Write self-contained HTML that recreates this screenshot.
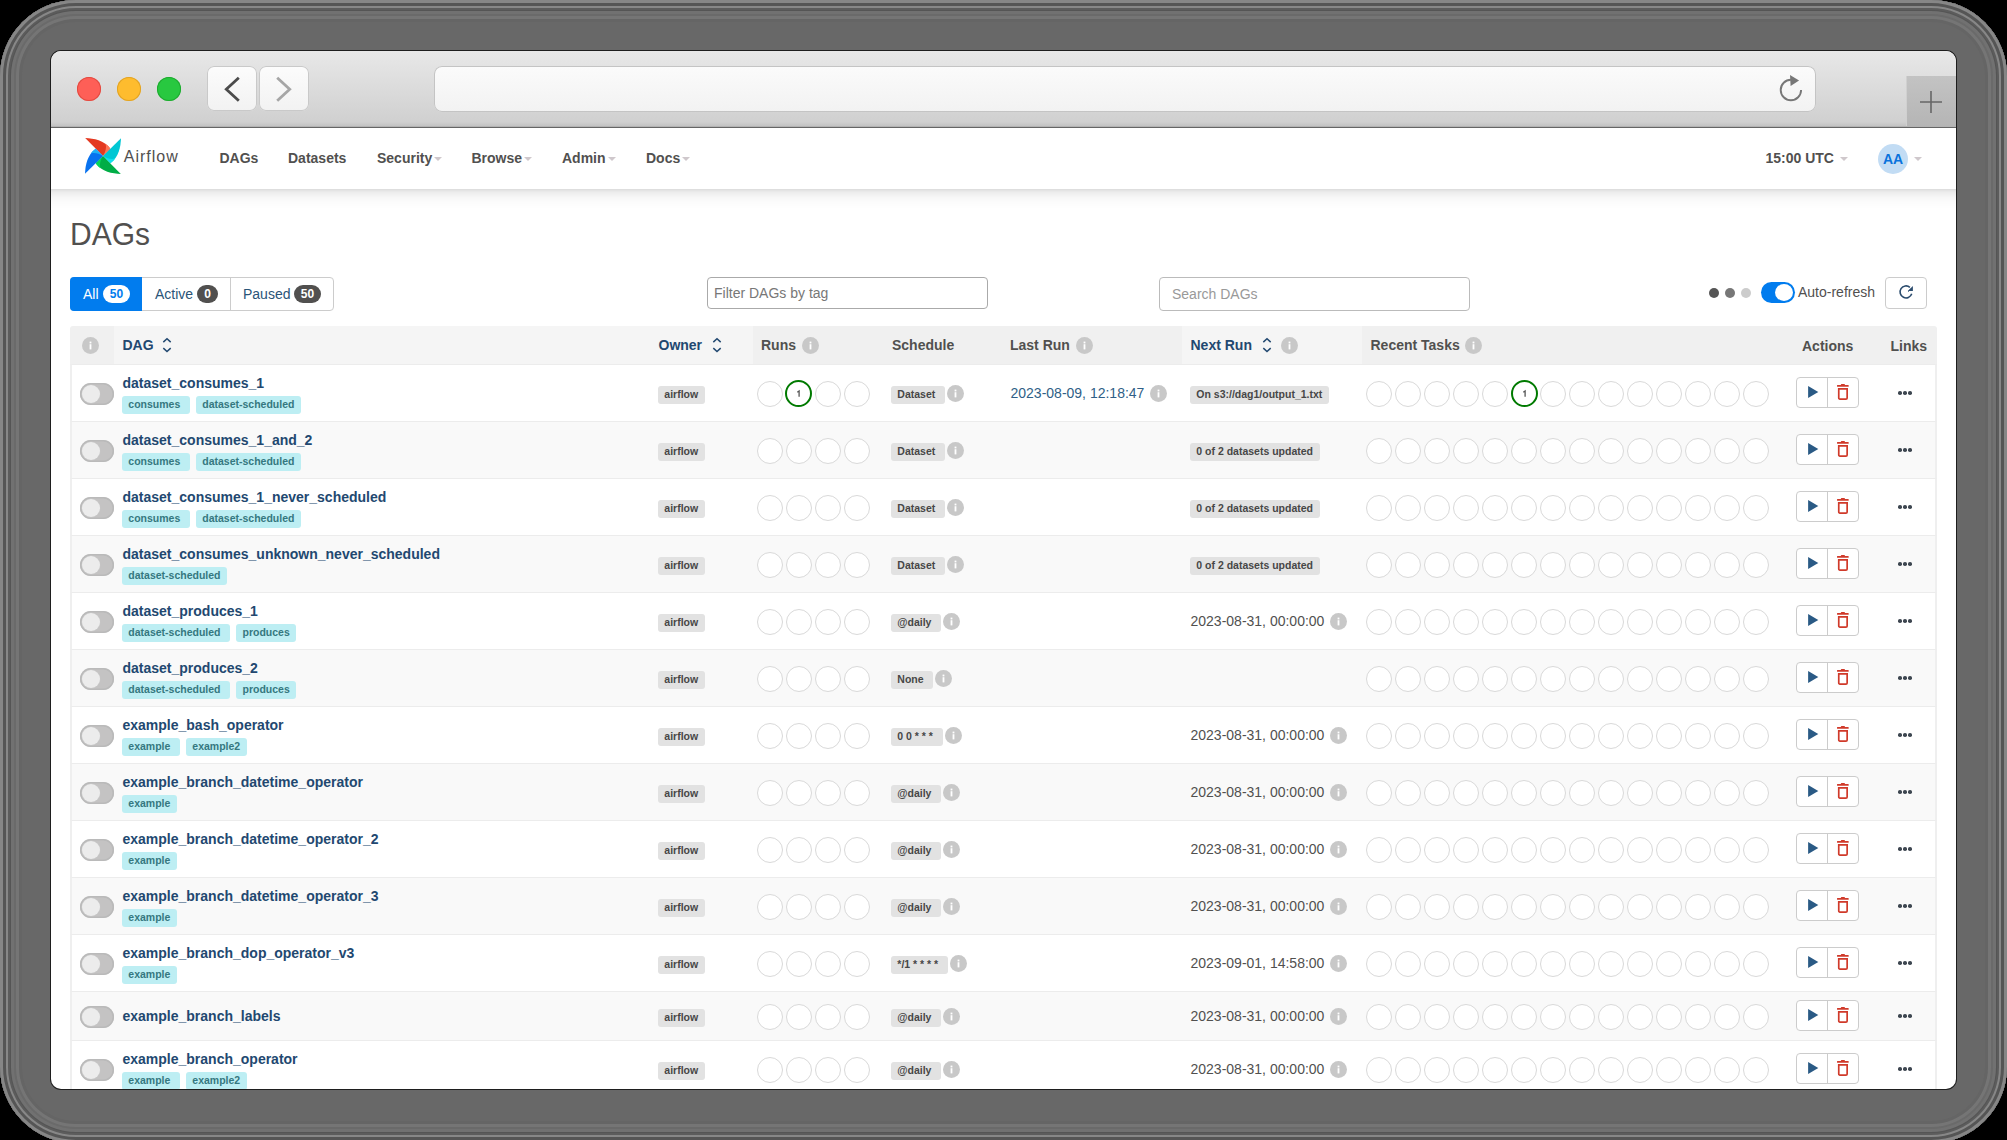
<!DOCTYPE html><html><head><meta charset="utf-8"><title>Airflow DAGs</title><style>
*{box-sizing:border-box}
html,body{margin:0;padding:0}
body{width:2007px;height:1140px;position:relative;overflow:hidden;background:#000;font-family:"Liberation Sans",sans-serif;color:#51504f}
.frame{position:absolute;left:0;top:0;width:2007px;height:1143px;border-radius:76px;background:#686868;box-shadow:inset 0 0 0 3px #868686, inset 0 0 0 6px #555, inset 0 0 0 8px #878787, inset 0 0 0 10px #5c5c5c, inset 0 0 0 11px #555, inset 0 0 0 14px #717171, inset 0 0 0 16px #6a6a6a, inset 0 0 0 19px #757575, inset 0 0 0 22px #656565}
.winb{position:absolute;left:50px;top:50px;width:1907px;height:1040px;border-radius:11px;background:#1e1e1e}
.win{position:absolute;left:0;top:0;width:2007px;height:1140px;clip-path:inset(51px 51px 51px 51px round 10px);background:#fff}
.abs,.t,.info,.caret,.lbl,.tag,.own,.circ,.tog,.rowbg{position:absolute}
.t{white-space:nowrap}
.toolbar{position:absolute;left:51px;top:51px;width:1905px;height:77px;background:linear-gradient(#e8e8e8,#d0d0d0 92%,#c4c4c4 97%,#a8a8a8 98.7%,#656565 98.7%)}
.tl{position:absolute;top:77px;width:24px;height:24px;border-radius:50%}
.red{left:77px;background:#fe5f57;box-shadow:inset 0 0 0 1px #e24b41}
.yel{left:117px;background:#febc2e;box-shadow:inset 0 0 0 1px #e1a325}
.grn{left:157px;background:#28c840;box-shadow:inset 0 0 0 1px #1eaa2f}
.navbtn{position:absolute;top:66px;width:50px;height:45px;border-radius:7px;background:linear-gradient(#fcfcfc,#f2f2f2);box-shadow:inset 0 0 0 1px #c9c9c9}
.navbtn svg{position:absolute;left:0;top:0}
.back{left:207px}.fwd{left:259px}
.url{position:absolute;left:434px;top:66px;width:1382px;height:46px;border-radius:8px;background:linear-gradient(#fbfbfb,#f2f2f2);box-shadow:inset 0 0 0 1px #c4c4c4}
.newtab{position:absolute;left:1906px;top:76px;width:50px;height:50px;background:linear-gradient(#c3c3c3,#b5b5b5);box-shadow:inset 1px 0 0 #d0d0d0}
.navbar{position:absolute;left:51px;top:128px;width:1905px;height:61px;background:#fff}
.nshadow{position:absolute;left:51px;top:189px;width:1905px;height:20px;background:linear-gradient(rgba(0,0,0,.14),rgba(0,0,0,.075) 15%,rgba(0,0,0,.035) 40%,rgba(0,0,0,.012) 70%,rgba(0,0,0,0))}
.nav{font-weight:bold;color:#51504f}
.caret{width:0;height:0}
.lbl{font-size:10.5px;font-weight:bold;padding:0 6.3px;border-radius:3px;white-space:nowrap;text-align:center}
.tag{font-size:10.5px;font-weight:bold;padding:0 6.3px;border-radius:3px;white-space:nowrap;background:#bdeef3;color:#357880;height:18px;line-height:16px}
.own{font-size:10.5px;font-weight:bold;padding:0 6.8px 0 6.3px;border-radius:3px;white-space:nowrap;background:#e2e2e2;color:#474747;height:18px;line-height:16px}
.grey{background:#e2e2e2;color:#444}
.circ{width:26px;height:26px;border-radius:50%;border:1px solid #d9d9d9;background:#fff;font-size:10px;text-align:center;line-height:22px;color:#51504f}
.circ.ok{border:2px solid #007a00;width:27px;height:27px;margin:-0.5px 0 0 -0.5px}
.tog{width:34px;height:22px;border-radius:11px;background:#c4c3c3;box-shadow:inset 0 0 0 1.5px #bababa}
.tog i{position:absolute;left:2px;top:2px;width:18px;height:18px;border-radius:50%;background:#ececec;box-shadow:0 0 0 0.5px #c8c8c8}
.name{font-weight:bold;color:#224870}
.hd{font-weight:bold;color:#51504f}
.hds{font-weight:bold;color:#224870}
</style></head><body>
<div class="frame"></div><div class="winb"></div>
<div class="win">
<div class="toolbar"></div>
<span class="tl red"></span><span class="tl yel"></span><span class="tl grn"></span>
<div class="navbtn back"><svg width="50" height="45" viewBox="0 0 50 45"><path d="M31.8 11.7 L19.3 23.2 L31.8 34.7" fill="none" stroke="#4b4b4b" stroke-width="2.8"/></svg></div>
<div class="navbtn fwd"><svg width="50" height="45" viewBox="0 0 50 45"><path d="M18.2 11.7 L30.7 23.2 L18.2 34.7" fill="none" stroke="#a6a6a6" stroke-width="2.8"/></svg></div>
<div class="url"></div>
<svg class="abs" style="left:1775px;top:74px" width="32" height="32" viewBox="0 0 32 32"><path d="M15.9 5.8 A10.2 10.2 0 1 0 26.1 16" fill="none" stroke="#777" stroke-width="1.9"/><path d="M15 1.1 L24.1 6.4 L15.6 12.1 Z" fill="#777"/></svg>
<div class="newtab"></div><svg class="abs" style="left:1906px;top:76px" width="50" height="50" viewBox="0 0 50 50"><path d="M25 15 V37 M14 26 H36" stroke="#666" stroke-width="1.6"/></svg>
<div class="navbar"></div><div class="nshadow"></div>
<svg class="abs" style="left:85px;top:138px" width="36" height="36" viewBox="0 0 36 36">
<defs><g id="bl"><path d="M0.2 0 C9 0.4 19 2.2 25.3 10.7 L18 18 Z"/></g></defs>
<path d="M0.2 0 C9 0.4 19 2.2 25.3 10.7 L18 18 Z" fill="#e43921"/>
<path d="M18 18 C20.5 14 21.8 9.5 20.6 5.8 C22.6 7.3 24.2 8.9 25.3 10.7 Z" fill="#ff7557"/>
<g transform="rotate(90 18 18)"><path d="M0.2 0 C9 0.4 19 2.2 25.3 10.7 L18 18 Z" fill="#00c7d4"/><path d="M18 18 C20.5 14 21.8 9.5 20.6 5.8 C22.6 7.3 24.2 8.9 25.3 10.7 Z" fill="#11e1ee"/></g>
<g transform="rotate(180 18 18)"><path d="M0.2 0 C9 0.4 19 2.2 25.3 10.7 L18 18 Z" fill="#00ad46"/><path d="M18 18 C20.5 14 21.8 9.5 20.6 5.8 C22.6 7.3 24.2 8.9 25.3 10.7 Z" fill="#04d659"/></g>
<g transform="rotate(270 18 18)"><path d="M0.2 0 C9 0.4 19 2.2 25.3 10.7 L18 18 Z" fill="#0872ef"/><path d="M18 18 C20.5 14 21.8 9.5 20.6 5.8 C22.6 7.3 24.2 8.9 25.3 10.7 Z" fill="#1fb0f5"/></g>
</svg>
<div class="t " style="left:123.8px;top:148.36px;font-size:16px;line-height:18px;color:#51504f;letter-spacing:1px;">Airflow</div>
<div class="t nav" style="left:219.5px;top:150.45px;font-size:14px;line-height:16px;">DAGs</div>
<div class="t nav" style="left:288px;top:150.45px;font-size:14px;line-height:16px;">Datasets</div>
<div class="t nav" style="left:377px;top:150.45px;font-size:14px;line-height:16px;">Security</div>
<div class="t nav" style="left:471.5px;top:150.45px;font-size:14px;line-height:16px;">Browse</div>
<div class="t nav" style="left:562px;top:150.45px;font-size:14px;line-height:16px;">Admin</div>
<div class="t nav" style="left:646px;top:150.45px;font-size:14px;line-height:16px;">Docs</div>
<div class="caret" style="left:434.4px;top:157px;border-left:4.0px solid transparent;border-right:4.0px solid transparent;border-top:4.0px solid #cfc8cc"></div>
<div class="caret" style="left:523.5px;top:157px;border-left:4.0px solid transparent;border-right:4.0px solid transparent;border-top:4.0px solid #cfc8cc"></div>
<div class="caret" style="left:607.5px;top:157px;border-left:4.0px solid transparent;border-right:4.0px solid transparent;border-top:4.0px solid #cfc8cc"></div>
<div class="caret" style="left:682px;top:157px;border-left:4.0px solid transparent;border-right:4.0px solid transparent;border-top:4.0px solid #cfc8cc"></div>
<div class="t nav" style="left:1765.5px;top:150.45px;font-size:14px;line-height:16px;">15:00 UTC</div>
<div class="caret" style="left:1840px;top:157px;border-left:4.0px solid transparent;border-right:4.0px solid transparent;border-top:4.0px solid #cfc8cc"></div>
<div class="abs" style="left:1878px;top:143.7px;width:30px;height:30px;border-radius:50%;background:#c2dcf4"></div>
<div class="t " style="left:1878px;top:151.15px;font-size:14px;line-height:16px;font-weight:bold;color:#0a72dc;width:30px;text-align:center;">AA</div>
<div class="caret" style="left:1914px;top:157px;border-left:4.0px solid transparent;border-right:4.0px solid transparent;border-top:4.0px solid #cfc8cc"></div>
<div class="t " style="left:70px;top:218.41px;font-size:30px;line-height:34px;color:#51504f;transform:scaleY(1.05);transform-origin:0 27.4px;">DAGs</div>
<div class="abs" style="left:70px;top:277px;width:264px;height:34px;border-radius:4px;border:1px solid #ccc;background:#fff"></div>
<div class="abs" style="left:70px;top:277px;width:72px;height:34px;border-radius:4px 0 0 4px;background:#017cee"></div>
<div class="abs" style="left:230px;top:278px;width:1px;height:32px;background:#ccc"></div>
<div class="t " style="left:83px;top:285.65px;font-size:14px;line-height:16px;color:#fff;">All</div>
<div class="abs" style="left:103px;top:285px;width:27px;height:18px;border-radius:9px;background:#fff;color:#017cee;font-size:12px;font-weight:bold;line-height:18px;text-align:center">50</div>
<div class="t " style="left:155px;top:285.65px;font-size:14px;line-height:16px;color:#2a5478;">Active</div>
<div class="abs" style="left:197px;top:285px;width:21px;height:18px;border-radius:9px;background:#51504f;color:#fff;font-size:12px;font-weight:bold;line-height:18px;text-align:center">0</div>
<div class="t " style="left:243px;top:285.65px;font-size:14px;line-height:16px;color:#2a5478;">Paused</div>
<div class="abs" style="left:294px;top:285px;width:27px;height:18px;border-radius:9px;background:#51504f;color:#fff;font-size:12px;font-weight:bold;line-height:18px;text-align:center">50</div>
<div class="abs" style="left:707px;top:277px;width:281px;height:32px;border-radius:4px;border:1px solid #aaa;background:#fff"></div>
<div class="t " style="left:714px;top:285.15px;font-size:14px;line-height:16px;color:#777;">Filter DAGs by tag</div>
<div class="abs" style="left:1159px;top:277px;width:311px;height:34px;border-radius:4px;border:1px solid #bbb;background:#fff"></div>
<div class="t " style="left:1172px;top:286.15px;font-size:14px;line-height:16px;color:#999;">Search DAGs</div>
<div class="abs" style="left:1709px;top:288px;width:10px;height:10px;border-radius:50%;background:#555"></div>
<div class="abs" style="left:1725px;top:288px;width:10px;height:10px;border-radius:50%;background:#777"></div>
<div class="abs" style="left:1741px;top:288px;width:10px;height:10px;border-radius:50%;background:#ccc"></div>
<div class="abs" style="left:1761px;top:282px;width:34px;height:21px;border-radius:11px;background:#017cee"></div>
<div class="abs" style="left:1775px;top:284px;width:18px;height:17px;border-radius:50%;background:#fff"></div>
<div class="t " style="left:1798px;top:284.15px;font-size:14px;line-height:16px;color:#51504f;">Auto-refresh</div>
<div class="abs" style="left:1885px;top:277px;width:42px;height:32px;border-radius:4px;border:1px solid #ccc;background:#fff"></div>
<svg class="abs" style="left:1896px;top:283px" width="20" height="20" viewBox="0 0 20 20"><path d="M13.9 4.3 A6 6 0 1 0 15.74 10.85" fill="none" stroke="#2b4c6e" stroke-width="1.6"/><path d="M16.9 2.9 V7.9 H11.9Z" fill="#2b4c6e"/><path d="M12 8.7 L15.2 5.6" stroke="#2b4c6e" stroke-width="1"/></svg>
<div class="abs" style="left:70px;top:326px;width:1867px;height:38px;background:#f0f0f0;border-radius:3px 3px 0 0"></div>
<div class="abs" style="left:114px;top:326px;width:639px;height:38px;background:#f5f5f5"></div>
<div class="abs" style="left:1182px;top:326px;width:180px;height:38px;background:#f5f5f5"></div>
<div class="info" style="left:81.50px;top:336.50px;width:17px;height:17px"><svg width="17" height="17" viewBox="0 0 17 17"><circle cx="8.5" cy="8.5" r="8.5" fill="#c8c8c8"/><rect x="7.6" y="7.2" width="1.8" height="5.2" fill="#fff"/><rect x="7.6" y="4.6" width="1.8" height="1.8" fill="#fff"/></svg></div>
<div class="t hds" style="left:122.5px;top:337.15px;font-size:14px;line-height:16px;">DAG</div>
<svg class="abs" style="left:162px;top:337px" width="10" height="16" viewBox="0 0 10 16"><path d="M1.3 5.1 L5 1.7 L8.7 5.1 M1.3 11.1 L5 14.5 L8.7 11.1" fill="none" stroke="#224870" stroke-width="1.5"/></svg>
<div class="t hds" style="left:658.5px;top:337.15px;font-size:14px;line-height:16px;">Owner</div>
<svg class="abs" style="left:711.5px;top:337px" width="10" height="16" viewBox="0 0 10 16"><path d="M1.3 5.1 L5 1.7 L8.7 5.1 M1.3 11.1 L5 14.5 L8.7 11.1" fill="none" stroke="#224870" stroke-width="1.5"/></svg>
<div class="t hd" style="left:761px;top:337.15px;font-size:14px;line-height:16px;">Runs</div>
<div class="info" style="left:801.50px;top:336.50px;width:17px;height:17px"><svg width="17" height="17" viewBox="0 0 17 17"><circle cx="8.5" cy="8.5" r="8.5" fill="#c8c8c8"/><rect x="7.6" y="7.2" width="1.8" height="5.2" fill="#fff"/><rect x="7.6" y="4.6" width="1.8" height="1.8" fill="#fff"/></svg></div>
<div class="t hd" style="left:892px;top:337.15px;font-size:14px;line-height:16px;">Schedule</div>
<div class="t hd" style="left:1010px;top:337.15px;font-size:14px;line-height:16px;">Last Run</div>
<div class="info" style="left:1076.00px;top:336.50px;width:17px;height:17px"><svg width="17" height="17" viewBox="0 0 17 17"><circle cx="8.5" cy="8.5" r="8.5" fill="#c8c8c8"/><rect x="7.6" y="7.2" width="1.8" height="5.2" fill="#fff"/><rect x="7.6" y="4.6" width="1.8" height="1.8" fill="#fff"/></svg></div>
<div class="t hds" style="left:1190.5px;top:337.15px;font-size:14px;line-height:16px;">Next Run</div>
<svg class="abs" style="left:1261.5px;top:337px" width="10" height="16" viewBox="0 0 10 16"><path d="M1.3 5.1 L5 1.7 L8.7 5.1 M1.3 11.1 L5 14.5 L8.7 11.1" fill="none" stroke="#224870" stroke-width="1.5"/></svg>
<div class="info" style="left:1281.00px;top:336.50px;width:17px;height:17px"><svg width="17" height="17" viewBox="0 0 17 17"><circle cx="8.5" cy="8.5" r="8.5" fill="#c8c8c8"/><rect x="7.6" y="7.2" width="1.8" height="5.2" fill="#fff"/><rect x="7.6" y="4.6" width="1.8" height="1.8" fill="#fff"/></svg></div>
<div class="t hd" style="left:1370.5px;top:337.15px;font-size:14px;line-height:16px;">Recent Tasks</div>
<div class="info" style="left:1465.00px;top:336.50px;width:17px;height:17px"><svg width="17" height="17" viewBox="0 0 17 17"><circle cx="8.5" cy="8.5" r="8.5" fill="#c8c8c8"/><rect x="7.6" y="7.2" width="1.8" height="5.2" fill="#fff"/><rect x="7.6" y="4.6" width="1.8" height="1.8" fill="#fff"/></svg></div>
<div class="t hd" style="left:1802px;top:338.15px;font-size:14px;line-height:16px;">Actions</div>
<div class="t hd" style="left:1890.5px;top:338.15px;font-size:14px;line-height:16px;">Links</div>
<div class="rowbg" style="left:70px;top:364px;width:1867px;height:57px;background:#fff;border-top:1px solid #ececec;border-left:2px solid #efefef;border-right:2px solid #efefef"></div>
<div class="tog" style="left:80px;top:383px"><i></i></div>
<div class="t name" style="left:122.5px;top:374.65px;font-size:14px;line-height:16px;">dataset_consumes_1</div>
<div class="abs" style="left:122px;top:395.5px;display:flex;gap:6px"><span class="tag" style="position:static;padding-right:6.8px">consumes&nbsp;</span><span class="tag" style="position:static">dataset-scheduled</span></div>
<div class="own" style="left:658px;top:386.0px">airflow</div>
<div class="circ" style="left:756.8px;top:380.9px"></div>
<div class="circ ok" style="left:785.8px;top:380.9px"><svg width="26" height="26" viewBox="0 0 26 26" style="position:absolute;left:-2px;top:-2px"><path d="M12.3 12.3 L14.1 11 V16.8" fill="none" stroke="#555" stroke-width="1.3"/></svg></div>
<div class="circ" style="left:814.8px;top:380.9px"></div>
<div class="circ" style="left:843.8px;top:380.9px"></div>
<div class="abs" style="left:891px;top:386.0px;display:flex;gap:2px;align-items:flex-start"><span class="own" style="position:static">Dataset&nbsp;</span><svg style="margin-top:-1px" width="17" height="17" viewBox="0 0 17 17"><circle cx="8.5" cy="8.5" r="8.5" fill="#c8c8c8"/><rect x="7.6" y="7.2" width="1.8" height="5.2" fill="#fff"/><rect x="7.6" y="4.6" width="1.8" height="1.8" fill="#fff"/></svg></div>
<div class="t " style="left:1010.5px;top:384.95px;font-size:14px;line-height:16px;color:#2f5f87;">2023-08-09, 12:18:47</div>
<div class="info" style="left:1149.80px;top:384.60px;width:17px;height:17px"><svg width="17" height="17" viewBox="0 0 17 17"><circle cx="8.5" cy="8.5" r="8.5" fill="#c8c8c8"/><rect x="7.6" y="7.2" width="1.8" height="5.2" fill="#fff"/><rect x="7.6" y="4.6" width="1.8" height="1.8" fill="#fff"/></svg></div>
<div class="own" style="left:1190px;top:386.0px">On s3://dag1/output_1.txt</div>
<div class="circ" style="left:1366.0px;top:380.9px"></div>
<div class="circ" style="left:1395.0px;top:380.9px"></div>
<div class="circ" style="left:1424.0px;top:380.9px"></div>
<div class="circ" style="left:1453.0px;top:380.9px"></div>
<div class="circ" style="left:1482.0px;top:380.9px"></div>
<div class="circ ok" style="left:1511.0px;top:380.9px"><svg width="26" height="26" viewBox="0 0 26 26" style="position:absolute;left:-2px;top:-2px"><path d="M12.3 12.3 L14.1 11 V16.8" fill="none" stroke="#555" stroke-width="1.3"/></svg></div>
<div class="circ" style="left:1540.0px;top:380.9px"></div>
<div class="circ" style="left:1569.0px;top:380.9px"></div>
<div class="circ" style="left:1598.0px;top:380.9px"></div>
<div class="circ" style="left:1627.0px;top:380.9px"></div>
<div class="circ" style="left:1656.0px;top:380.9px"></div>
<div class="circ" style="left:1685.0px;top:380.9px"></div>
<div class="circ" style="left:1714.0px;top:380.9px"></div>
<div class="circ" style="left:1743.0px;top:380.9px"></div>
<div class="abs" style="left:1796px;top:377px;width:63px;height:31px;border:1px solid #ccc;border-radius:4px;background:#fff"></div>
<div class="abs" style="left:1827px;top:378px;width:1px;height:29px;background:#ccc"></div>
<svg class="abs" style="left:1806px;top:383px" width="14" height="18" viewBox="0 0 14 18"><path d="M2.1 3 L12.3 9 L2.1 14.9Z" fill="#2a5a85"/></svg>
<svg class="abs" style="left:1836px;top:383px" width="14" height="18" viewBox="0 0 14 18"><rect x="4.9" y="1" width="4" height="1.6" rx="0.6" fill="#d03a2a"/><rect x="1" y="2" width="11.7" height="1.8" rx="0.5" fill="#d03a2a"/><path d="M2.75 5.85 H11.15 V14.9 Q11.15 16.05 10 16.05 H3.9 Q2.75 16.05 2.75 14.9Z" fill="none" stroke="#d03a2a" stroke-width="1.7"/></svg>
<div class="abs" style="left:1898.2px;top:391.2px;width:3.6px;height:3.6px;border-radius:50%;background:#3d4650"></div>
<div class="abs" style="left:1903.2px;top:391.2px;width:3.6px;height:3.6px;border-radius:50%;background:#3d4650"></div>
<div class="abs" style="left:1908.2px;top:391.2px;width:3.6px;height:3.6px;border-radius:50%;background:#3d4650"></div>
<div class="rowbg" style="left:70px;top:421px;width:1867px;height:57px;background:#f9f9f9;border-top:1px solid #ececec;border-left:2px solid #efefef;border-right:2px solid #efefef"></div>
<div class="tog" style="left:80px;top:440px"><i></i></div>
<div class="t name" style="left:122.5px;top:431.65px;font-size:14px;line-height:16px;">dataset_consumes_1_and_2</div>
<div class="abs" style="left:122px;top:452.5px;display:flex;gap:6px"><span class="tag" style="position:static;padding-right:6.8px">consumes&nbsp;</span><span class="tag" style="position:static">dataset-scheduled</span></div>
<div class="own" style="left:658px;top:443.0px">airflow</div>
<div class="circ" style="left:756.8px;top:437.9px"></div>
<div class="circ" style="left:785.8px;top:437.9px"></div>
<div class="circ" style="left:814.8px;top:437.9px"></div>
<div class="circ" style="left:843.8px;top:437.9px"></div>
<div class="abs" style="left:891px;top:443.0px;display:flex;gap:2px;align-items:flex-start"><span class="own" style="position:static">Dataset&nbsp;</span><svg style="margin-top:-1px" width="17" height="17" viewBox="0 0 17 17"><circle cx="8.5" cy="8.5" r="8.5" fill="#c8c8c8"/><rect x="7.6" y="7.2" width="1.8" height="5.2" fill="#fff"/><rect x="7.6" y="4.6" width="1.8" height="1.8" fill="#fff"/></svg></div>
<div class="own" style="left:1190px;top:443.0px">0 of 2 datasets updated</div>
<div class="circ" style="left:1366.0px;top:437.9px"></div>
<div class="circ" style="left:1395.0px;top:437.9px"></div>
<div class="circ" style="left:1424.0px;top:437.9px"></div>
<div class="circ" style="left:1453.0px;top:437.9px"></div>
<div class="circ" style="left:1482.0px;top:437.9px"></div>
<div class="circ" style="left:1511.0px;top:437.9px"></div>
<div class="circ" style="left:1540.0px;top:437.9px"></div>
<div class="circ" style="left:1569.0px;top:437.9px"></div>
<div class="circ" style="left:1598.0px;top:437.9px"></div>
<div class="circ" style="left:1627.0px;top:437.9px"></div>
<div class="circ" style="left:1656.0px;top:437.9px"></div>
<div class="circ" style="left:1685.0px;top:437.9px"></div>
<div class="circ" style="left:1714.0px;top:437.9px"></div>
<div class="circ" style="left:1743.0px;top:437.9px"></div>
<div class="abs" style="left:1796px;top:434px;width:63px;height:31px;border:1px solid #ccc;border-radius:4px;background:#fff"></div>
<div class="abs" style="left:1827px;top:435px;width:1px;height:29px;background:#ccc"></div>
<svg class="abs" style="left:1806px;top:440px" width="14" height="18" viewBox="0 0 14 18"><path d="M2.1 3 L12.3 9 L2.1 14.9Z" fill="#2a5a85"/></svg>
<svg class="abs" style="left:1836px;top:440px" width="14" height="18" viewBox="0 0 14 18"><rect x="4.9" y="1" width="4" height="1.6" rx="0.6" fill="#d03a2a"/><rect x="1" y="2" width="11.7" height="1.8" rx="0.5" fill="#d03a2a"/><path d="M2.75 5.85 H11.15 V14.9 Q11.15 16.05 10 16.05 H3.9 Q2.75 16.05 2.75 14.9Z" fill="none" stroke="#d03a2a" stroke-width="1.7"/></svg>
<div class="abs" style="left:1898.2px;top:448.2px;width:3.6px;height:3.6px;border-radius:50%;background:#3d4650"></div>
<div class="abs" style="left:1903.2px;top:448.2px;width:3.6px;height:3.6px;border-radius:50%;background:#3d4650"></div>
<div class="abs" style="left:1908.2px;top:448.2px;width:3.6px;height:3.6px;border-radius:50%;background:#3d4650"></div>
<div class="rowbg" style="left:70px;top:478px;width:1867px;height:57px;background:#fff;border-top:1px solid #ececec;border-left:2px solid #efefef;border-right:2px solid #efefef"></div>
<div class="tog" style="left:80px;top:497px"><i></i></div>
<div class="t name" style="left:122.5px;top:488.65px;font-size:14px;line-height:16px;">dataset_consumes_1_never_scheduled</div>
<div class="abs" style="left:122px;top:509.5px;display:flex;gap:6px"><span class="tag" style="position:static;padding-right:6.8px">consumes&nbsp;</span><span class="tag" style="position:static">dataset-scheduled</span></div>
<div class="own" style="left:658px;top:500.0px">airflow</div>
<div class="circ" style="left:756.8px;top:494.9px"></div>
<div class="circ" style="left:785.8px;top:494.9px"></div>
<div class="circ" style="left:814.8px;top:494.9px"></div>
<div class="circ" style="left:843.8px;top:494.9px"></div>
<div class="abs" style="left:891px;top:500.0px;display:flex;gap:2px;align-items:flex-start"><span class="own" style="position:static">Dataset&nbsp;</span><svg style="margin-top:-1px" width="17" height="17" viewBox="0 0 17 17"><circle cx="8.5" cy="8.5" r="8.5" fill="#c8c8c8"/><rect x="7.6" y="7.2" width="1.8" height="5.2" fill="#fff"/><rect x="7.6" y="4.6" width="1.8" height="1.8" fill="#fff"/></svg></div>
<div class="own" style="left:1190px;top:500.0px">0 of 2 datasets updated</div>
<div class="circ" style="left:1366.0px;top:494.9px"></div>
<div class="circ" style="left:1395.0px;top:494.9px"></div>
<div class="circ" style="left:1424.0px;top:494.9px"></div>
<div class="circ" style="left:1453.0px;top:494.9px"></div>
<div class="circ" style="left:1482.0px;top:494.9px"></div>
<div class="circ" style="left:1511.0px;top:494.9px"></div>
<div class="circ" style="left:1540.0px;top:494.9px"></div>
<div class="circ" style="left:1569.0px;top:494.9px"></div>
<div class="circ" style="left:1598.0px;top:494.9px"></div>
<div class="circ" style="left:1627.0px;top:494.9px"></div>
<div class="circ" style="left:1656.0px;top:494.9px"></div>
<div class="circ" style="left:1685.0px;top:494.9px"></div>
<div class="circ" style="left:1714.0px;top:494.9px"></div>
<div class="circ" style="left:1743.0px;top:494.9px"></div>
<div class="abs" style="left:1796px;top:491px;width:63px;height:31px;border:1px solid #ccc;border-radius:4px;background:#fff"></div>
<div class="abs" style="left:1827px;top:492px;width:1px;height:29px;background:#ccc"></div>
<svg class="abs" style="left:1806px;top:497px" width="14" height="18" viewBox="0 0 14 18"><path d="M2.1 3 L12.3 9 L2.1 14.9Z" fill="#2a5a85"/></svg>
<svg class="abs" style="left:1836px;top:497px" width="14" height="18" viewBox="0 0 14 18"><rect x="4.9" y="1" width="4" height="1.6" rx="0.6" fill="#d03a2a"/><rect x="1" y="2" width="11.7" height="1.8" rx="0.5" fill="#d03a2a"/><path d="M2.75 5.85 H11.15 V14.9 Q11.15 16.05 10 16.05 H3.9 Q2.75 16.05 2.75 14.9Z" fill="none" stroke="#d03a2a" stroke-width="1.7"/></svg>
<div class="abs" style="left:1898.2px;top:505.2px;width:3.6px;height:3.6px;border-radius:50%;background:#3d4650"></div>
<div class="abs" style="left:1903.2px;top:505.2px;width:3.6px;height:3.6px;border-radius:50%;background:#3d4650"></div>
<div class="abs" style="left:1908.2px;top:505.2px;width:3.6px;height:3.6px;border-radius:50%;background:#3d4650"></div>
<div class="rowbg" style="left:70px;top:535px;width:1867px;height:57px;background:#f9f9f9;border-top:1px solid #ececec;border-left:2px solid #efefef;border-right:2px solid #efefef"></div>
<div class="tog" style="left:80px;top:554px"><i></i></div>
<div class="t name" style="left:122.5px;top:545.65px;font-size:14px;line-height:16px;">dataset_consumes_unknown_never_scheduled</div>
<div class="abs" style="left:122px;top:566.5px;display:flex;gap:6px"><span class="tag" style="position:static">dataset-scheduled</span></div>
<div class="own" style="left:658px;top:557.0px">airflow</div>
<div class="circ" style="left:756.8px;top:551.9px"></div>
<div class="circ" style="left:785.8px;top:551.9px"></div>
<div class="circ" style="left:814.8px;top:551.9px"></div>
<div class="circ" style="left:843.8px;top:551.9px"></div>
<div class="abs" style="left:891px;top:557.0px;display:flex;gap:2px;align-items:flex-start"><span class="own" style="position:static">Dataset&nbsp;</span><svg style="margin-top:-1px" width="17" height="17" viewBox="0 0 17 17"><circle cx="8.5" cy="8.5" r="8.5" fill="#c8c8c8"/><rect x="7.6" y="7.2" width="1.8" height="5.2" fill="#fff"/><rect x="7.6" y="4.6" width="1.8" height="1.8" fill="#fff"/></svg></div>
<div class="own" style="left:1190px;top:557.0px">0 of 2 datasets updated</div>
<div class="circ" style="left:1366.0px;top:551.9px"></div>
<div class="circ" style="left:1395.0px;top:551.9px"></div>
<div class="circ" style="left:1424.0px;top:551.9px"></div>
<div class="circ" style="left:1453.0px;top:551.9px"></div>
<div class="circ" style="left:1482.0px;top:551.9px"></div>
<div class="circ" style="left:1511.0px;top:551.9px"></div>
<div class="circ" style="left:1540.0px;top:551.9px"></div>
<div class="circ" style="left:1569.0px;top:551.9px"></div>
<div class="circ" style="left:1598.0px;top:551.9px"></div>
<div class="circ" style="left:1627.0px;top:551.9px"></div>
<div class="circ" style="left:1656.0px;top:551.9px"></div>
<div class="circ" style="left:1685.0px;top:551.9px"></div>
<div class="circ" style="left:1714.0px;top:551.9px"></div>
<div class="circ" style="left:1743.0px;top:551.9px"></div>
<div class="abs" style="left:1796px;top:548px;width:63px;height:31px;border:1px solid #ccc;border-radius:4px;background:#fff"></div>
<div class="abs" style="left:1827px;top:549px;width:1px;height:29px;background:#ccc"></div>
<svg class="abs" style="left:1806px;top:554px" width="14" height="18" viewBox="0 0 14 18"><path d="M2.1 3 L12.3 9 L2.1 14.9Z" fill="#2a5a85"/></svg>
<svg class="abs" style="left:1836px;top:554px" width="14" height="18" viewBox="0 0 14 18"><rect x="4.9" y="1" width="4" height="1.6" rx="0.6" fill="#d03a2a"/><rect x="1" y="2" width="11.7" height="1.8" rx="0.5" fill="#d03a2a"/><path d="M2.75 5.85 H11.15 V14.9 Q11.15 16.05 10 16.05 H3.9 Q2.75 16.05 2.75 14.9Z" fill="none" stroke="#d03a2a" stroke-width="1.7"/></svg>
<div class="abs" style="left:1898.2px;top:562.2px;width:3.6px;height:3.6px;border-radius:50%;background:#3d4650"></div>
<div class="abs" style="left:1903.2px;top:562.2px;width:3.6px;height:3.6px;border-radius:50%;background:#3d4650"></div>
<div class="abs" style="left:1908.2px;top:562.2px;width:3.6px;height:3.6px;border-radius:50%;background:#3d4650"></div>
<div class="rowbg" style="left:70px;top:592px;width:1867px;height:57px;background:#fff;border-top:1px solid #ececec;border-left:2px solid #efefef;border-right:2px solid #efefef"></div>
<div class="tog" style="left:80px;top:611px"><i></i></div>
<div class="t name" style="left:122.5px;top:602.65px;font-size:14px;line-height:16px;">dataset_produces_1</div>
<div class="abs" style="left:122px;top:623.5px;display:flex;gap:6px"><span class="tag" style="position:static;padding-right:6.8px">dataset-scheduled&nbsp;</span><span class="tag" style="position:static">produces</span></div>
<div class="own" style="left:658px;top:614.0px">airflow</div>
<div class="circ" style="left:756.8px;top:608.9px"></div>
<div class="circ" style="left:785.8px;top:608.9px"></div>
<div class="circ" style="left:814.8px;top:608.9px"></div>
<div class="circ" style="left:843.8px;top:608.9px"></div>
<div class="abs" style="left:891px;top:614.0px;display:flex;gap:2px;align-items:flex-start"><span class="own" style="position:static">@daily&nbsp;</span><svg style="margin-top:-1px" width="17" height="17" viewBox="0 0 17 17"><circle cx="8.5" cy="8.5" r="8.5" fill="#c8c8c8"/><rect x="7.6" y="7.2" width="1.8" height="5.2" fill="#fff"/><rect x="7.6" y="4.6" width="1.8" height="1.8" fill="#fff"/></svg></div>
<div class="t " style="left:1190.5px;top:612.95px;font-size:14px;line-height:16px;color:#51504f;">2023-08-31, 00:00:00</div>
<div class="info" style="left:1330.00px;top:612.60px;width:17px;height:17px"><svg width="17" height="17" viewBox="0 0 17 17"><circle cx="8.5" cy="8.5" r="8.5" fill="#c8c8c8"/><rect x="7.6" y="7.2" width="1.8" height="5.2" fill="#fff"/><rect x="7.6" y="4.6" width="1.8" height="1.8" fill="#fff"/></svg></div>
<div class="circ" style="left:1366.0px;top:608.9px"></div>
<div class="circ" style="left:1395.0px;top:608.9px"></div>
<div class="circ" style="left:1424.0px;top:608.9px"></div>
<div class="circ" style="left:1453.0px;top:608.9px"></div>
<div class="circ" style="left:1482.0px;top:608.9px"></div>
<div class="circ" style="left:1511.0px;top:608.9px"></div>
<div class="circ" style="left:1540.0px;top:608.9px"></div>
<div class="circ" style="left:1569.0px;top:608.9px"></div>
<div class="circ" style="left:1598.0px;top:608.9px"></div>
<div class="circ" style="left:1627.0px;top:608.9px"></div>
<div class="circ" style="left:1656.0px;top:608.9px"></div>
<div class="circ" style="left:1685.0px;top:608.9px"></div>
<div class="circ" style="left:1714.0px;top:608.9px"></div>
<div class="circ" style="left:1743.0px;top:608.9px"></div>
<div class="abs" style="left:1796px;top:605px;width:63px;height:31px;border:1px solid #ccc;border-radius:4px;background:#fff"></div>
<div class="abs" style="left:1827px;top:606px;width:1px;height:29px;background:#ccc"></div>
<svg class="abs" style="left:1806px;top:611px" width="14" height="18" viewBox="0 0 14 18"><path d="M2.1 3 L12.3 9 L2.1 14.9Z" fill="#2a5a85"/></svg>
<svg class="abs" style="left:1836px;top:611px" width="14" height="18" viewBox="0 0 14 18"><rect x="4.9" y="1" width="4" height="1.6" rx="0.6" fill="#d03a2a"/><rect x="1" y="2" width="11.7" height="1.8" rx="0.5" fill="#d03a2a"/><path d="M2.75 5.85 H11.15 V14.9 Q11.15 16.05 10 16.05 H3.9 Q2.75 16.05 2.75 14.9Z" fill="none" stroke="#d03a2a" stroke-width="1.7"/></svg>
<div class="abs" style="left:1898.2px;top:619.2px;width:3.6px;height:3.6px;border-radius:50%;background:#3d4650"></div>
<div class="abs" style="left:1903.2px;top:619.2px;width:3.6px;height:3.6px;border-radius:50%;background:#3d4650"></div>
<div class="abs" style="left:1908.2px;top:619.2px;width:3.6px;height:3.6px;border-radius:50%;background:#3d4650"></div>
<div class="rowbg" style="left:70px;top:649px;width:1867px;height:57px;background:#f9f9f9;border-top:1px solid #ececec;border-left:2px solid #efefef;border-right:2px solid #efefef"></div>
<div class="tog" style="left:80px;top:668px"><i></i></div>
<div class="t name" style="left:122.5px;top:659.65px;font-size:14px;line-height:16px;">dataset_produces_2</div>
<div class="abs" style="left:122px;top:680.5px;display:flex;gap:6px"><span class="tag" style="position:static;padding-right:6.8px">dataset-scheduled&nbsp;</span><span class="tag" style="position:static">produces</span></div>
<div class="own" style="left:658px;top:671.0px">airflow</div>
<div class="circ" style="left:756.8px;top:665.9px"></div>
<div class="circ" style="left:785.8px;top:665.9px"></div>
<div class="circ" style="left:814.8px;top:665.9px"></div>
<div class="circ" style="left:843.8px;top:665.9px"></div>
<div class="abs" style="left:891px;top:671.0px;display:flex;gap:2px;align-items:flex-start"><span class="own" style="position:static">None&nbsp;</span><svg style="margin-top:-1px" width="17" height="17" viewBox="0 0 17 17"><circle cx="8.5" cy="8.5" r="8.5" fill="#c8c8c8"/><rect x="7.6" y="7.2" width="1.8" height="5.2" fill="#fff"/><rect x="7.6" y="4.6" width="1.8" height="1.8" fill="#fff"/></svg></div>
<div class="circ" style="left:1366.0px;top:665.9px"></div>
<div class="circ" style="left:1395.0px;top:665.9px"></div>
<div class="circ" style="left:1424.0px;top:665.9px"></div>
<div class="circ" style="left:1453.0px;top:665.9px"></div>
<div class="circ" style="left:1482.0px;top:665.9px"></div>
<div class="circ" style="left:1511.0px;top:665.9px"></div>
<div class="circ" style="left:1540.0px;top:665.9px"></div>
<div class="circ" style="left:1569.0px;top:665.9px"></div>
<div class="circ" style="left:1598.0px;top:665.9px"></div>
<div class="circ" style="left:1627.0px;top:665.9px"></div>
<div class="circ" style="left:1656.0px;top:665.9px"></div>
<div class="circ" style="left:1685.0px;top:665.9px"></div>
<div class="circ" style="left:1714.0px;top:665.9px"></div>
<div class="circ" style="left:1743.0px;top:665.9px"></div>
<div class="abs" style="left:1796px;top:662px;width:63px;height:31px;border:1px solid #ccc;border-radius:4px;background:#fff"></div>
<div class="abs" style="left:1827px;top:663px;width:1px;height:29px;background:#ccc"></div>
<svg class="abs" style="left:1806px;top:668px" width="14" height="18" viewBox="0 0 14 18"><path d="M2.1 3 L12.3 9 L2.1 14.9Z" fill="#2a5a85"/></svg>
<svg class="abs" style="left:1836px;top:668px" width="14" height="18" viewBox="0 0 14 18"><rect x="4.9" y="1" width="4" height="1.6" rx="0.6" fill="#d03a2a"/><rect x="1" y="2" width="11.7" height="1.8" rx="0.5" fill="#d03a2a"/><path d="M2.75 5.85 H11.15 V14.9 Q11.15 16.05 10 16.05 H3.9 Q2.75 16.05 2.75 14.9Z" fill="none" stroke="#d03a2a" stroke-width="1.7"/></svg>
<div class="abs" style="left:1898.2px;top:676.2px;width:3.6px;height:3.6px;border-radius:50%;background:#3d4650"></div>
<div class="abs" style="left:1903.2px;top:676.2px;width:3.6px;height:3.6px;border-radius:50%;background:#3d4650"></div>
<div class="abs" style="left:1908.2px;top:676.2px;width:3.6px;height:3.6px;border-radius:50%;background:#3d4650"></div>
<div class="rowbg" style="left:70px;top:706px;width:1867px;height:57px;background:#fff;border-top:1px solid #ececec;border-left:2px solid #efefef;border-right:2px solid #efefef"></div>
<div class="tog" style="left:80px;top:725px"><i></i></div>
<div class="t name" style="left:122.5px;top:716.65px;font-size:14px;line-height:16px;">example_bash_operator</div>
<div class="abs" style="left:122px;top:737.5px;display:flex;gap:6px"><span class="tag" style="position:static;padding-right:6.8px">example&nbsp;</span><span class="tag" style="position:static">example2</span></div>
<div class="own" style="left:658px;top:728.0px">airflow</div>
<div class="circ" style="left:756.8px;top:722.9px"></div>
<div class="circ" style="left:785.8px;top:722.9px"></div>
<div class="circ" style="left:814.8px;top:722.9px"></div>
<div class="circ" style="left:843.8px;top:722.9px"></div>
<div class="abs" style="left:891px;top:728.0px;display:flex;gap:2px;align-items:flex-start"><span class="own" style="position:static">0 0 * * *&nbsp;</span><svg style="margin-top:-1px" width="17" height="17" viewBox="0 0 17 17"><circle cx="8.5" cy="8.5" r="8.5" fill="#c8c8c8"/><rect x="7.6" y="7.2" width="1.8" height="5.2" fill="#fff"/><rect x="7.6" y="4.6" width="1.8" height="1.8" fill="#fff"/></svg></div>
<div class="t " style="left:1190.5px;top:726.95px;font-size:14px;line-height:16px;color:#51504f;">2023-08-31, 00:00:00</div>
<div class="info" style="left:1330.00px;top:726.60px;width:17px;height:17px"><svg width="17" height="17" viewBox="0 0 17 17"><circle cx="8.5" cy="8.5" r="8.5" fill="#c8c8c8"/><rect x="7.6" y="7.2" width="1.8" height="5.2" fill="#fff"/><rect x="7.6" y="4.6" width="1.8" height="1.8" fill="#fff"/></svg></div>
<div class="circ" style="left:1366.0px;top:722.9px"></div>
<div class="circ" style="left:1395.0px;top:722.9px"></div>
<div class="circ" style="left:1424.0px;top:722.9px"></div>
<div class="circ" style="left:1453.0px;top:722.9px"></div>
<div class="circ" style="left:1482.0px;top:722.9px"></div>
<div class="circ" style="left:1511.0px;top:722.9px"></div>
<div class="circ" style="left:1540.0px;top:722.9px"></div>
<div class="circ" style="left:1569.0px;top:722.9px"></div>
<div class="circ" style="left:1598.0px;top:722.9px"></div>
<div class="circ" style="left:1627.0px;top:722.9px"></div>
<div class="circ" style="left:1656.0px;top:722.9px"></div>
<div class="circ" style="left:1685.0px;top:722.9px"></div>
<div class="circ" style="left:1714.0px;top:722.9px"></div>
<div class="circ" style="left:1743.0px;top:722.9px"></div>
<div class="abs" style="left:1796px;top:719px;width:63px;height:31px;border:1px solid #ccc;border-radius:4px;background:#fff"></div>
<div class="abs" style="left:1827px;top:720px;width:1px;height:29px;background:#ccc"></div>
<svg class="abs" style="left:1806px;top:725px" width="14" height="18" viewBox="0 0 14 18"><path d="M2.1 3 L12.3 9 L2.1 14.9Z" fill="#2a5a85"/></svg>
<svg class="abs" style="left:1836px;top:725px" width="14" height="18" viewBox="0 0 14 18"><rect x="4.9" y="1" width="4" height="1.6" rx="0.6" fill="#d03a2a"/><rect x="1" y="2" width="11.7" height="1.8" rx="0.5" fill="#d03a2a"/><path d="M2.75 5.85 H11.15 V14.9 Q11.15 16.05 10 16.05 H3.9 Q2.75 16.05 2.75 14.9Z" fill="none" stroke="#d03a2a" stroke-width="1.7"/></svg>
<div class="abs" style="left:1898.2px;top:733.2px;width:3.6px;height:3.6px;border-radius:50%;background:#3d4650"></div>
<div class="abs" style="left:1903.2px;top:733.2px;width:3.6px;height:3.6px;border-radius:50%;background:#3d4650"></div>
<div class="abs" style="left:1908.2px;top:733.2px;width:3.6px;height:3.6px;border-radius:50%;background:#3d4650"></div>
<div class="rowbg" style="left:70px;top:763px;width:1867px;height:57px;background:#f9f9f9;border-top:1px solid #ececec;border-left:2px solid #efefef;border-right:2px solid #efefef"></div>
<div class="tog" style="left:80px;top:782px"><i></i></div>
<div class="t name" style="left:122.5px;top:773.65px;font-size:14px;line-height:16px;">example_branch_datetime_operator</div>
<div class="abs" style="left:122px;top:794.5px;display:flex;gap:6px"><span class="tag" style="position:static">example</span></div>
<div class="own" style="left:658px;top:785.0px">airflow</div>
<div class="circ" style="left:756.8px;top:779.9px"></div>
<div class="circ" style="left:785.8px;top:779.9px"></div>
<div class="circ" style="left:814.8px;top:779.9px"></div>
<div class="circ" style="left:843.8px;top:779.9px"></div>
<div class="abs" style="left:891px;top:785.0px;display:flex;gap:2px;align-items:flex-start"><span class="own" style="position:static">@daily&nbsp;</span><svg style="margin-top:-1px" width="17" height="17" viewBox="0 0 17 17"><circle cx="8.5" cy="8.5" r="8.5" fill="#c8c8c8"/><rect x="7.6" y="7.2" width="1.8" height="5.2" fill="#fff"/><rect x="7.6" y="4.6" width="1.8" height="1.8" fill="#fff"/></svg></div>
<div class="t " style="left:1190.5px;top:783.95px;font-size:14px;line-height:16px;color:#51504f;">2023-08-31, 00:00:00</div>
<div class="info" style="left:1330.00px;top:783.60px;width:17px;height:17px"><svg width="17" height="17" viewBox="0 0 17 17"><circle cx="8.5" cy="8.5" r="8.5" fill="#c8c8c8"/><rect x="7.6" y="7.2" width="1.8" height="5.2" fill="#fff"/><rect x="7.6" y="4.6" width="1.8" height="1.8" fill="#fff"/></svg></div>
<div class="circ" style="left:1366.0px;top:779.9px"></div>
<div class="circ" style="left:1395.0px;top:779.9px"></div>
<div class="circ" style="left:1424.0px;top:779.9px"></div>
<div class="circ" style="left:1453.0px;top:779.9px"></div>
<div class="circ" style="left:1482.0px;top:779.9px"></div>
<div class="circ" style="left:1511.0px;top:779.9px"></div>
<div class="circ" style="left:1540.0px;top:779.9px"></div>
<div class="circ" style="left:1569.0px;top:779.9px"></div>
<div class="circ" style="left:1598.0px;top:779.9px"></div>
<div class="circ" style="left:1627.0px;top:779.9px"></div>
<div class="circ" style="left:1656.0px;top:779.9px"></div>
<div class="circ" style="left:1685.0px;top:779.9px"></div>
<div class="circ" style="left:1714.0px;top:779.9px"></div>
<div class="circ" style="left:1743.0px;top:779.9px"></div>
<div class="abs" style="left:1796px;top:776px;width:63px;height:31px;border:1px solid #ccc;border-radius:4px;background:#fff"></div>
<div class="abs" style="left:1827px;top:777px;width:1px;height:29px;background:#ccc"></div>
<svg class="abs" style="left:1806px;top:782px" width="14" height="18" viewBox="0 0 14 18"><path d="M2.1 3 L12.3 9 L2.1 14.9Z" fill="#2a5a85"/></svg>
<svg class="abs" style="left:1836px;top:782px" width="14" height="18" viewBox="0 0 14 18"><rect x="4.9" y="1" width="4" height="1.6" rx="0.6" fill="#d03a2a"/><rect x="1" y="2" width="11.7" height="1.8" rx="0.5" fill="#d03a2a"/><path d="M2.75 5.85 H11.15 V14.9 Q11.15 16.05 10 16.05 H3.9 Q2.75 16.05 2.75 14.9Z" fill="none" stroke="#d03a2a" stroke-width="1.7"/></svg>
<div class="abs" style="left:1898.2px;top:790.2px;width:3.6px;height:3.6px;border-radius:50%;background:#3d4650"></div>
<div class="abs" style="left:1903.2px;top:790.2px;width:3.6px;height:3.6px;border-radius:50%;background:#3d4650"></div>
<div class="abs" style="left:1908.2px;top:790.2px;width:3.6px;height:3.6px;border-radius:50%;background:#3d4650"></div>
<div class="rowbg" style="left:70px;top:820px;width:1867px;height:57px;background:#fff;border-top:1px solid #ececec;border-left:2px solid #efefef;border-right:2px solid #efefef"></div>
<div class="tog" style="left:80px;top:839px"><i></i></div>
<div class="t name" style="left:122.5px;top:830.65px;font-size:14px;line-height:16px;">example_branch_datetime_operator_2</div>
<div class="abs" style="left:122px;top:851.5px;display:flex;gap:6px"><span class="tag" style="position:static">example</span></div>
<div class="own" style="left:658px;top:842.0px">airflow</div>
<div class="circ" style="left:756.8px;top:836.9px"></div>
<div class="circ" style="left:785.8px;top:836.9px"></div>
<div class="circ" style="left:814.8px;top:836.9px"></div>
<div class="circ" style="left:843.8px;top:836.9px"></div>
<div class="abs" style="left:891px;top:842.0px;display:flex;gap:2px;align-items:flex-start"><span class="own" style="position:static">@daily&nbsp;</span><svg style="margin-top:-1px" width="17" height="17" viewBox="0 0 17 17"><circle cx="8.5" cy="8.5" r="8.5" fill="#c8c8c8"/><rect x="7.6" y="7.2" width="1.8" height="5.2" fill="#fff"/><rect x="7.6" y="4.6" width="1.8" height="1.8" fill="#fff"/></svg></div>
<div class="t " style="left:1190.5px;top:840.95px;font-size:14px;line-height:16px;color:#51504f;">2023-08-31, 00:00:00</div>
<div class="info" style="left:1330.00px;top:840.60px;width:17px;height:17px"><svg width="17" height="17" viewBox="0 0 17 17"><circle cx="8.5" cy="8.5" r="8.5" fill="#c8c8c8"/><rect x="7.6" y="7.2" width="1.8" height="5.2" fill="#fff"/><rect x="7.6" y="4.6" width="1.8" height="1.8" fill="#fff"/></svg></div>
<div class="circ" style="left:1366.0px;top:836.9px"></div>
<div class="circ" style="left:1395.0px;top:836.9px"></div>
<div class="circ" style="left:1424.0px;top:836.9px"></div>
<div class="circ" style="left:1453.0px;top:836.9px"></div>
<div class="circ" style="left:1482.0px;top:836.9px"></div>
<div class="circ" style="left:1511.0px;top:836.9px"></div>
<div class="circ" style="left:1540.0px;top:836.9px"></div>
<div class="circ" style="left:1569.0px;top:836.9px"></div>
<div class="circ" style="left:1598.0px;top:836.9px"></div>
<div class="circ" style="left:1627.0px;top:836.9px"></div>
<div class="circ" style="left:1656.0px;top:836.9px"></div>
<div class="circ" style="left:1685.0px;top:836.9px"></div>
<div class="circ" style="left:1714.0px;top:836.9px"></div>
<div class="circ" style="left:1743.0px;top:836.9px"></div>
<div class="abs" style="left:1796px;top:833px;width:63px;height:31px;border:1px solid #ccc;border-radius:4px;background:#fff"></div>
<div class="abs" style="left:1827px;top:834px;width:1px;height:29px;background:#ccc"></div>
<svg class="abs" style="left:1806px;top:839px" width="14" height="18" viewBox="0 0 14 18"><path d="M2.1 3 L12.3 9 L2.1 14.9Z" fill="#2a5a85"/></svg>
<svg class="abs" style="left:1836px;top:839px" width="14" height="18" viewBox="0 0 14 18"><rect x="4.9" y="1" width="4" height="1.6" rx="0.6" fill="#d03a2a"/><rect x="1" y="2" width="11.7" height="1.8" rx="0.5" fill="#d03a2a"/><path d="M2.75 5.85 H11.15 V14.9 Q11.15 16.05 10 16.05 H3.9 Q2.75 16.05 2.75 14.9Z" fill="none" stroke="#d03a2a" stroke-width="1.7"/></svg>
<div class="abs" style="left:1898.2px;top:847.2px;width:3.6px;height:3.6px;border-radius:50%;background:#3d4650"></div>
<div class="abs" style="left:1903.2px;top:847.2px;width:3.6px;height:3.6px;border-radius:50%;background:#3d4650"></div>
<div class="abs" style="left:1908.2px;top:847.2px;width:3.6px;height:3.6px;border-radius:50%;background:#3d4650"></div>
<div class="rowbg" style="left:70px;top:877px;width:1867px;height:57px;background:#f9f9f9;border-top:1px solid #ececec;border-left:2px solid #efefef;border-right:2px solid #efefef"></div>
<div class="tog" style="left:80px;top:896px"><i></i></div>
<div class="t name" style="left:122.5px;top:887.65px;font-size:14px;line-height:16px;">example_branch_datetime_operator_3</div>
<div class="abs" style="left:122px;top:908.5px;display:flex;gap:6px"><span class="tag" style="position:static">example</span></div>
<div class="own" style="left:658px;top:899.0px">airflow</div>
<div class="circ" style="left:756.8px;top:893.9px"></div>
<div class="circ" style="left:785.8px;top:893.9px"></div>
<div class="circ" style="left:814.8px;top:893.9px"></div>
<div class="circ" style="left:843.8px;top:893.9px"></div>
<div class="abs" style="left:891px;top:899.0px;display:flex;gap:2px;align-items:flex-start"><span class="own" style="position:static">@daily&nbsp;</span><svg style="margin-top:-1px" width="17" height="17" viewBox="0 0 17 17"><circle cx="8.5" cy="8.5" r="8.5" fill="#c8c8c8"/><rect x="7.6" y="7.2" width="1.8" height="5.2" fill="#fff"/><rect x="7.6" y="4.6" width="1.8" height="1.8" fill="#fff"/></svg></div>
<div class="t " style="left:1190.5px;top:897.95px;font-size:14px;line-height:16px;color:#51504f;">2023-08-31, 00:00:00</div>
<div class="info" style="left:1330.00px;top:897.60px;width:17px;height:17px"><svg width="17" height="17" viewBox="0 0 17 17"><circle cx="8.5" cy="8.5" r="8.5" fill="#c8c8c8"/><rect x="7.6" y="7.2" width="1.8" height="5.2" fill="#fff"/><rect x="7.6" y="4.6" width="1.8" height="1.8" fill="#fff"/></svg></div>
<div class="circ" style="left:1366.0px;top:893.9px"></div>
<div class="circ" style="left:1395.0px;top:893.9px"></div>
<div class="circ" style="left:1424.0px;top:893.9px"></div>
<div class="circ" style="left:1453.0px;top:893.9px"></div>
<div class="circ" style="left:1482.0px;top:893.9px"></div>
<div class="circ" style="left:1511.0px;top:893.9px"></div>
<div class="circ" style="left:1540.0px;top:893.9px"></div>
<div class="circ" style="left:1569.0px;top:893.9px"></div>
<div class="circ" style="left:1598.0px;top:893.9px"></div>
<div class="circ" style="left:1627.0px;top:893.9px"></div>
<div class="circ" style="left:1656.0px;top:893.9px"></div>
<div class="circ" style="left:1685.0px;top:893.9px"></div>
<div class="circ" style="left:1714.0px;top:893.9px"></div>
<div class="circ" style="left:1743.0px;top:893.9px"></div>
<div class="abs" style="left:1796px;top:890px;width:63px;height:31px;border:1px solid #ccc;border-radius:4px;background:#fff"></div>
<div class="abs" style="left:1827px;top:891px;width:1px;height:29px;background:#ccc"></div>
<svg class="abs" style="left:1806px;top:896px" width="14" height="18" viewBox="0 0 14 18"><path d="M2.1 3 L12.3 9 L2.1 14.9Z" fill="#2a5a85"/></svg>
<svg class="abs" style="left:1836px;top:896px" width="14" height="18" viewBox="0 0 14 18"><rect x="4.9" y="1" width="4" height="1.6" rx="0.6" fill="#d03a2a"/><rect x="1" y="2" width="11.7" height="1.8" rx="0.5" fill="#d03a2a"/><path d="M2.75 5.85 H11.15 V14.9 Q11.15 16.05 10 16.05 H3.9 Q2.75 16.05 2.75 14.9Z" fill="none" stroke="#d03a2a" stroke-width="1.7"/></svg>
<div class="abs" style="left:1898.2px;top:904.2px;width:3.6px;height:3.6px;border-radius:50%;background:#3d4650"></div>
<div class="abs" style="left:1903.2px;top:904.2px;width:3.6px;height:3.6px;border-radius:50%;background:#3d4650"></div>
<div class="abs" style="left:1908.2px;top:904.2px;width:3.6px;height:3.6px;border-radius:50%;background:#3d4650"></div>
<div class="rowbg" style="left:70px;top:934px;width:1867px;height:57px;background:#fff;border-top:1px solid #ececec;border-left:2px solid #efefef;border-right:2px solid #efefef"></div>
<div class="tog" style="left:80px;top:953px"><i></i></div>
<div class="t name" style="left:122.5px;top:944.65px;font-size:14px;line-height:16px;">example_branch_dop_operator_v3</div>
<div class="abs" style="left:122px;top:965.5px;display:flex;gap:6px"><span class="tag" style="position:static">example</span></div>
<div class="own" style="left:658px;top:956.0px">airflow</div>
<div class="circ" style="left:756.8px;top:950.9px"></div>
<div class="circ" style="left:785.8px;top:950.9px"></div>
<div class="circ" style="left:814.8px;top:950.9px"></div>
<div class="circ" style="left:843.8px;top:950.9px"></div>
<div class="abs" style="left:891px;top:956.0px;display:flex;gap:2px;align-items:flex-start"><span class="own" style="position:static">*/1 * * * *&nbsp;</span><svg style="margin-top:-1px" width="17" height="17" viewBox="0 0 17 17"><circle cx="8.5" cy="8.5" r="8.5" fill="#c8c8c8"/><rect x="7.6" y="7.2" width="1.8" height="5.2" fill="#fff"/><rect x="7.6" y="4.6" width="1.8" height="1.8" fill="#fff"/></svg></div>
<div class="t " style="left:1190.5px;top:954.95px;font-size:14px;line-height:16px;color:#51504f;">2023-09-01, 14:58:00</div>
<div class="info" style="left:1330.00px;top:954.60px;width:17px;height:17px"><svg width="17" height="17" viewBox="0 0 17 17"><circle cx="8.5" cy="8.5" r="8.5" fill="#c8c8c8"/><rect x="7.6" y="7.2" width="1.8" height="5.2" fill="#fff"/><rect x="7.6" y="4.6" width="1.8" height="1.8" fill="#fff"/></svg></div>
<div class="circ" style="left:1366.0px;top:950.9px"></div>
<div class="circ" style="left:1395.0px;top:950.9px"></div>
<div class="circ" style="left:1424.0px;top:950.9px"></div>
<div class="circ" style="left:1453.0px;top:950.9px"></div>
<div class="circ" style="left:1482.0px;top:950.9px"></div>
<div class="circ" style="left:1511.0px;top:950.9px"></div>
<div class="circ" style="left:1540.0px;top:950.9px"></div>
<div class="circ" style="left:1569.0px;top:950.9px"></div>
<div class="circ" style="left:1598.0px;top:950.9px"></div>
<div class="circ" style="left:1627.0px;top:950.9px"></div>
<div class="circ" style="left:1656.0px;top:950.9px"></div>
<div class="circ" style="left:1685.0px;top:950.9px"></div>
<div class="circ" style="left:1714.0px;top:950.9px"></div>
<div class="circ" style="left:1743.0px;top:950.9px"></div>
<div class="abs" style="left:1796px;top:947px;width:63px;height:31px;border:1px solid #ccc;border-radius:4px;background:#fff"></div>
<div class="abs" style="left:1827px;top:948px;width:1px;height:29px;background:#ccc"></div>
<svg class="abs" style="left:1806px;top:953px" width="14" height="18" viewBox="0 0 14 18"><path d="M2.1 3 L12.3 9 L2.1 14.9Z" fill="#2a5a85"/></svg>
<svg class="abs" style="left:1836px;top:953px" width="14" height="18" viewBox="0 0 14 18"><rect x="4.9" y="1" width="4" height="1.6" rx="0.6" fill="#d03a2a"/><rect x="1" y="2" width="11.7" height="1.8" rx="0.5" fill="#d03a2a"/><path d="M2.75 5.85 H11.15 V14.9 Q11.15 16.05 10 16.05 H3.9 Q2.75 16.05 2.75 14.9Z" fill="none" stroke="#d03a2a" stroke-width="1.7"/></svg>
<div class="abs" style="left:1898.2px;top:961.2px;width:3.6px;height:3.6px;border-radius:50%;background:#3d4650"></div>
<div class="abs" style="left:1903.2px;top:961.2px;width:3.6px;height:3.6px;border-radius:50%;background:#3d4650"></div>
<div class="abs" style="left:1908.2px;top:961.2px;width:3.6px;height:3.6px;border-radius:50%;background:#3d4650"></div>
<div class="rowbg" style="left:70px;top:991px;width:1867px;height:49px;background:#f9f9f9;border-top:1px solid #ececec;border-left:2px solid #efefef;border-right:2px solid #efefef"></div>
<div class="tog" style="left:80px;top:1006px"><i></i></div>
<div class="t name" style="left:122.5px;top:1007.65px;font-size:14px;line-height:16px;">example_branch_labels</div>
<div class="own" style="left:658px;top:1009.0px">airflow</div>
<div class="circ" style="left:756.8px;top:1003.9px"></div>
<div class="circ" style="left:785.8px;top:1003.9px"></div>
<div class="circ" style="left:814.8px;top:1003.9px"></div>
<div class="circ" style="left:843.8px;top:1003.9px"></div>
<div class="abs" style="left:891px;top:1009.0px;display:flex;gap:2px;align-items:flex-start"><span class="own" style="position:static">@daily&nbsp;</span><svg style="margin-top:-1px" width="17" height="17" viewBox="0 0 17 17"><circle cx="8.5" cy="8.5" r="8.5" fill="#c8c8c8"/><rect x="7.6" y="7.2" width="1.8" height="5.2" fill="#fff"/><rect x="7.6" y="4.6" width="1.8" height="1.8" fill="#fff"/></svg></div>
<div class="t " style="left:1190.5px;top:1007.95px;font-size:14px;line-height:16px;color:#51504f;">2023-08-31, 00:00:00</div>
<div class="info" style="left:1330.00px;top:1007.60px;width:17px;height:17px"><svg width="17" height="17" viewBox="0 0 17 17"><circle cx="8.5" cy="8.5" r="8.5" fill="#c8c8c8"/><rect x="7.6" y="7.2" width="1.8" height="5.2" fill="#fff"/><rect x="7.6" y="4.6" width="1.8" height="1.8" fill="#fff"/></svg></div>
<div class="circ" style="left:1366.0px;top:1003.9px"></div>
<div class="circ" style="left:1395.0px;top:1003.9px"></div>
<div class="circ" style="left:1424.0px;top:1003.9px"></div>
<div class="circ" style="left:1453.0px;top:1003.9px"></div>
<div class="circ" style="left:1482.0px;top:1003.9px"></div>
<div class="circ" style="left:1511.0px;top:1003.9px"></div>
<div class="circ" style="left:1540.0px;top:1003.9px"></div>
<div class="circ" style="left:1569.0px;top:1003.9px"></div>
<div class="circ" style="left:1598.0px;top:1003.9px"></div>
<div class="circ" style="left:1627.0px;top:1003.9px"></div>
<div class="circ" style="left:1656.0px;top:1003.9px"></div>
<div class="circ" style="left:1685.0px;top:1003.9px"></div>
<div class="circ" style="left:1714.0px;top:1003.9px"></div>
<div class="circ" style="left:1743.0px;top:1003.9px"></div>
<div class="abs" style="left:1796px;top:1000px;width:63px;height:31px;border:1px solid #ccc;border-radius:4px;background:#fff"></div>
<div class="abs" style="left:1827px;top:1001px;width:1px;height:29px;background:#ccc"></div>
<svg class="abs" style="left:1806px;top:1006px" width="14" height="18" viewBox="0 0 14 18"><path d="M2.1 3 L12.3 9 L2.1 14.9Z" fill="#2a5a85"/></svg>
<svg class="abs" style="left:1836px;top:1006px" width="14" height="18" viewBox="0 0 14 18"><rect x="4.9" y="1" width="4" height="1.6" rx="0.6" fill="#d03a2a"/><rect x="1" y="2" width="11.7" height="1.8" rx="0.5" fill="#d03a2a"/><path d="M2.75 5.85 H11.15 V14.9 Q11.15 16.05 10 16.05 H3.9 Q2.75 16.05 2.75 14.9Z" fill="none" stroke="#d03a2a" stroke-width="1.7"/></svg>
<div class="abs" style="left:1898.2px;top:1014.2px;width:3.6px;height:3.6px;border-radius:50%;background:#3d4650"></div>
<div class="abs" style="left:1903.2px;top:1014.2px;width:3.6px;height:3.6px;border-radius:50%;background:#3d4650"></div>
<div class="abs" style="left:1908.2px;top:1014.2px;width:3.6px;height:3.6px;border-radius:50%;background:#3d4650"></div>
<div class="rowbg" style="left:70px;top:1040px;width:1867px;height:57px;background:#fff;border-top:1px solid #ececec;border-left:2px solid #efefef;border-right:2px solid #efefef"></div>
<div class="tog" style="left:80px;top:1059px"><i></i></div>
<div class="t name" style="left:122.5px;top:1050.65px;font-size:14px;line-height:16px;">example_branch_operator</div>
<div class="abs" style="left:122px;top:1071.5px;display:flex;gap:6px"><span class="tag" style="position:static;padding-right:6.8px">example&nbsp;</span><span class="tag" style="position:static">example2</span></div>
<div class="own" style="left:658px;top:1062.0px">airflow</div>
<div class="circ" style="left:756.8px;top:1056.9px"></div>
<div class="circ" style="left:785.8px;top:1056.9px"></div>
<div class="circ" style="left:814.8px;top:1056.9px"></div>
<div class="circ" style="left:843.8px;top:1056.9px"></div>
<div class="abs" style="left:891px;top:1062.0px;display:flex;gap:2px;align-items:flex-start"><span class="own" style="position:static">@daily&nbsp;</span><svg style="margin-top:-1px" width="17" height="17" viewBox="0 0 17 17"><circle cx="8.5" cy="8.5" r="8.5" fill="#c8c8c8"/><rect x="7.6" y="7.2" width="1.8" height="5.2" fill="#fff"/><rect x="7.6" y="4.6" width="1.8" height="1.8" fill="#fff"/></svg></div>
<div class="t " style="left:1190.5px;top:1060.95px;font-size:14px;line-height:16px;color:#51504f;">2023-08-31, 00:00:00</div>
<div class="info" style="left:1330.00px;top:1060.60px;width:17px;height:17px"><svg width="17" height="17" viewBox="0 0 17 17"><circle cx="8.5" cy="8.5" r="8.5" fill="#c8c8c8"/><rect x="7.6" y="7.2" width="1.8" height="5.2" fill="#fff"/><rect x="7.6" y="4.6" width="1.8" height="1.8" fill="#fff"/></svg></div>
<div class="circ" style="left:1366.0px;top:1056.9px"></div>
<div class="circ" style="left:1395.0px;top:1056.9px"></div>
<div class="circ" style="left:1424.0px;top:1056.9px"></div>
<div class="circ" style="left:1453.0px;top:1056.9px"></div>
<div class="circ" style="left:1482.0px;top:1056.9px"></div>
<div class="circ" style="left:1511.0px;top:1056.9px"></div>
<div class="circ" style="left:1540.0px;top:1056.9px"></div>
<div class="circ" style="left:1569.0px;top:1056.9px"></div>
<div class="circ" style="left:1598.0px;top:1056.9px"></div>
<div class="circ" style="left:1627.0px;top:1056.9px"></div>
<div class="circ" style="left:1656.0px;top:1056.9px"></div>
<div class="circ" style="left:1685.0px;top:1056.9px"></div>
<div class="circ" style="left:1714.0px;top:1056.9px"></div>
<div class="circ" style="left:1743.0px;top:1056.9px"></div>
<div class="abs" style="left:1796px;top:1053px;width:63px;height:31px;border:1px solid #ccc;border-radius:4px;background:#fff"></div>
<div class="abs" style="left:1827px;top:1054px;width:1px;height:29px;background:#ccc"></div>
<svg class="abs" style="left:1806px;top:1059px" width="14" height="18" viewBox="0 0 14 18"><path d="M2.1 3 L12.3 9 L2.1 14.9Z" fill="#2a5a85"/></svg>
<svg class="abs" style="left:1836px;top:1059px" width="14" height="18" viewBox="0 0 14 18"><rect x="4.9" y="1" width="4" height="1.6" rx="0.6" fill="#d03a2a"/><rect x="1" y="2" width="11.7" height="1.8" rx="0.5" fill="#d03a2a"/><path d="M2.75 5.85 H11.15 V14.9 Q11.15 16.05 10 16.05 H3.9 Q2.75 16.05 2.75 14.9Z" fill="none" stroke="#d03a2a" stroke-width="1.7"/></svg>
<div class="abs" style="left:1898.2px;top:1067.2px;width:3.6px;height:3.6px;border-radius:50%;background:#3d4650"></div>
<div class="abs" style="left:1903.2px;top:1067.2px;width:3.6px;height:3.6px;border-radius:50%;background:#3d4650"></div>
<div class="abs" style="left:1908.2px;top:1067.2px;width:3.6px;height:3.6px;border-radius:50%;background:#3d4650"></div>
</div>
</body></html>
